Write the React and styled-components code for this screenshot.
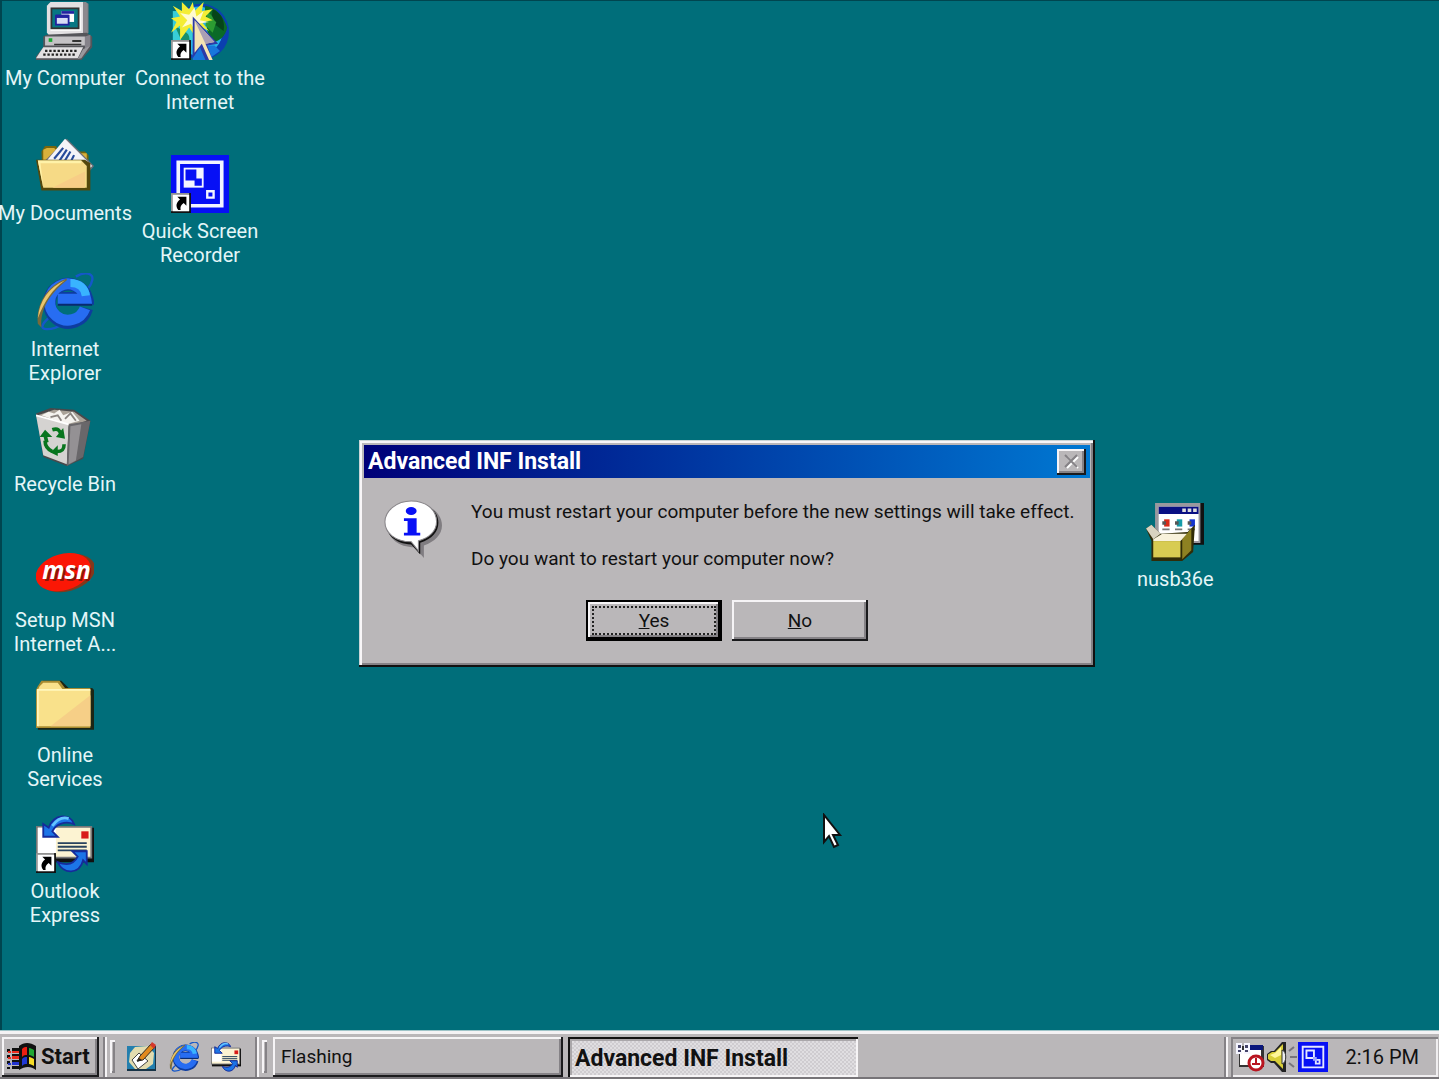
import React from "react"
import styled, { createGlobalStyle, css } from 'styled-components'

const GlobalStyle = createGlobalStyle`
  body {
    margin: 0;
    font-family: Roboto, "Liberation Sans", sans-serif;
    font-size: 19px;
    line-height: 24px;
    color: #111;
    overflow: hidden;
  }
  button {
    font: inherit;
    color: inherit;
    padding: 0;
    border: 0;
    border-radius: 0;
    background: #bab7b9;
  }
`

const raised = css`
  box-shadow: inset -2px -2px #1a1a1c, inset 2px 2px #f6f4f6, inset -4px -4px #858286;
`

const Screen = styled.div`
  display: flex;
  flex-direction: column;
  box-sizing: border-box;
  min-height: 100vh;
`

const Desktop = styled.main`
  position: relative;
  flex: 1;
  display: flex;
  align-items: flex-start;
  background: #006e7a;
  box-shadow: inset 2px 1px #00454f;
`

const IconColumn = styled.div`
  display: grid;
  grid-template-columns: minmax(0, 1fr);
  grid-template-rows: repeat(7, 1fr);
  width: 130px;
  height: 948px;
`

const SecondColumn = styled.div`
  display: flex;
  flex-direction: column;
  gap: 39px;
  width: 140px;
`

const Shortcut = styled.a`
  display: flex;
  flex-direction: column;
  align-items: center;
  gap: 6px;
  padding-top: 2px;
  color: #e4f6f8;
  font-size: 20px;
  text-align: center;
  text-decoration: none;
  white-space: pre;

  svg {
    width: 58px;
    height: 58px;
  }
`

const LooseShortcut = styled(Shortcut)`
  position: absolute;
  left: 1137px;
  top: 501px;
`

const Dialog = styled.section`
  position: absolute;
  left: 359px;
  top: 440px;
  width: 736px;
  box-sizing: border-box;
  padding: 5px 5px 26px;
  background: #bab7b9;
  box-shadow: inset -2px -2px #111, inset 1px 1px #c9d4d6, inset 3px 3px #f8f6f8, inset -4px -4px #858286;
`

const TitleBar = styled.header`
  display: flex;
  align-items: center;
  justify-content: space-between;
  height: 33px;
  padding: 0 4px;
  background: linear-gradient(90deg, #000078, #0078d2);
`

const Title = styled.h1`
  margin: 0;
  font-size: 23px;
  line-height: 24px;
  color: #fff;
`

const CloseButton = styled.button`
  ${raised}
  display: flex;
  align-items: center;
  justify-content: center;
  width: 29px;
  height: 26px;
`

const Message = styled.div`
  display: flex;
  gap: 29px;
  padding: 22px 20px 0;

  svg {
    flex: none;
  }
`

const MessageText = styled.div`
  white-space: nowrap;

  p {
    margin: 0 0 23px;
  }
`

const Buttons = styled.div`
  display: flex;
  justify-content: center;
  gap: 10px;
  margin-top: 6px;
`

const DialogButton = styled.button`
  ${raised}
  width: 136px;
  height: 41px;
  ${p => p.$focused && css`
    padding: 6px;
    box-shadow: inset 0 0 0 2px #000, inset -4px -4px #000, inset 4px 4px #f6f4f6, inset -6px -6px #858286;
  `}
`

const Focus = styled.span`
  display: block;
  border: 2px dotted #222;
  line-height: 25px;
`

const Pointer = styled.svg`
  position: absolute;
  left: 822px;
  top: 813px;
  width: 22px;
  height: 36px;
`

const Taskbar = styled.footer`
  display: flex;
  align-items: stretch;
  box-sizing: border-box;
  height: 49px;
  padding: 7px 1px 2px 2px;
  background: #bab7b9;
  box-shadow: inset 0 1px #9fc4c8, inset 0 4px #f4f2f4, inset 0 -2px #777478;
`

const StartButton = styled.button`
  ${raised}
  display: flex;
  align-items: center;
  gap: 4px;
  width: 97px;
  padding-left: 5px;
  font-weight: bold;
  font-size: 22px;

  svg {
    width: 30px;
    height: 29px;
  }
`

const Handle = styled.span`
  width: 5px;
  margin: 3px 0 4px ${p => p.$gap};
  box-shadow: inset 2px 2px #f6f4f6, inset -2px -2px #858286;
`

const Divider = styled.span`
  width: 4px;
  margin-left: ${p => p.$gap};
  background: linear-gradient(90deg, #858286 50%, #f6f4f6 50%);
`

const QuickLaunch = styled.nav`
  display: flex;
  align-items: center;
  gap: 12px;
  margin-left: 12px;

  a, svg {
    display: block;
    width: 30px;
    height: 30px;
  }
`

const TaskButton = styled.button`
  ${raised}
  width: 290px;
  margin-left: ${p => p.$gap};
  padding: 0 8px;
  text-align: left;
  ${p => p.$active && css`
    padding: 3px 7px 0;
    font-weight: bold;
    font-size: 23px;
    background: repeating-conic-gradient(#cfccd0 0 25%, #e0dee1 0 50%) 0 0 / 4px 4px;
    box-shadow: inset 2px 2px #111, inset -2px -2px #f6f4f6, inset 4px 4px #aaa7aa;
  `}
`

const Tray = styled.div`
  display: flex;
  align-items: center;
  gap: 1px;
  box-sizing: border-box;
  width: 207px;
  margin-left: 3px;
  padding: 0 19px 0 5px;
  font-size: 20px;
  box-shadow: inset 2px 2px #858286, inset -2px -2px #f0eef0;

  svg {
    width: 30px;
    height: 30px;
  }

  time {
    margin-left: auto;
  }
`

const Spacer = styled.span`
  margin-left: auto;
`

function ShortcutArrow() {
  return (
    <g>
      <path d="M0 21h11v11H0z" fill="#111" />
      <path d="M0 21h10v10H0z" fill="#999" />
      <path d="M1 22h9v9H1z" fill="#fff" />
      <path d="M3.500 23H8.500v5l-1.500-1.500C5.500 27.500 5 28.500 5.300 30.300H4C2.300 28 3 26 5 24.500z" fill="#000" />
    </g>
  )
}

function ComputerIcon() {
  return (
    <svg viewBox="0 0 32 32" aria-hidden="true">
      <path d="M7 1 9 0h18l2 1v16l-2 2H7z" fill="#77777c" />
      <path d="M6 2 8 0h18v18H7l-1-1z" fill="#e2e0e2" />
      <path d="M26 0h1.500l1 1v16l-2.500 2z" fill="#8c898e" />
      <path d="M8 3h17v13H8z" fill="#f8f8f8" />
      <path d="M8 3h16v12H8z" fill="#333" />
      <path d="M9 4h14v10H9z" fill="#087783" />
      <path d="M14 5h7v6h-7z" fill="#fff" />
      <path d="M14 5h7v1.500h-7z" fill="#2222a0" />
      <path d="M11 7.500h7v5h-7z" fill="#d8dcf5" stroke="#2222a0" />
      <path d="M11 7h7v1.800h-7z" fill="#2222a0" />
      <path d="m28 17 3 2v6l-6 7H0v-2l4-5v-6l2-1z" fill="#55555a" />
      <path d="M5 19h22v5H5z" fill="#c4c2c5" />
      <path d="m27 19 3-1v6l-3 2z" fill="#85828a" />
      <path d="M7 20h2v2H7z" fill="#18a830" />
      <path d="M20 21h5v1h-5zM10 23h15v.8H10z" fill="#333" />
      <path d="M4 25h22l-3 6H0z" fill="#e2e0e2" />
      <path d="M5 27h18M4 29h18" stroke="#222" strokeWidth="1.300" strokeDasharray="1.300 1" />
      <path d="m26 26 4-2-5 7-2 .5z" fill="#9a989d" />
    </svg>
  )
}

function ConnectIcon() {
  return (
    <svg viewBox="0 0 32 32" aria-hidden="true">
      <circle cx="16.500" cy="16.500" r="15.500" fill="#0b3fb0" />
      <circle cx="15" cy="16" r="13.500" fill="#29b5e8" />
      <path d="M1 5h11v16H1z" fill="#38cdd8" />
      <path d="M19 2c6 1 10 6 12 12-1 5-4 7-7 8-2-3-5-5-4-9 0-4-2-7-1-11z" fill="#0a6a28" />
      <path d="M23 4c5 2 7 7 6 12l-4-3-3-1z" fill="#064419" />
      <path d="M20 6c3 0 3 4 5 5l-2 6-4-4z" fill="#2c9b32" />
      <path d="M2 13c4 3 7 3 8 6l1 8-4-3z" fill="#178f6e" />
      <path d="M12 24h12l3 3-7 5h-8z" fill="#1877dc" />
      <path d="m12 0 1 5 5-5-1 5 6-1-4 4 4 2-6 1 4 5-6-3-1 7-4-6-5 7v-8l-5 4 3-6-3-2 5-1-4-6 5 3V0l4 4z" fill="#f4ed35" />
      <path d="m13 3 1 5 4-3-2 5 5 1-6 1-1 5-3-5-5 2 3-4-4-4 5 1z" fill="#fffbd0" />
      <path d="m12 8 14 15-6 1 3 8h-4l-3-7-4 6z" fill="#2c3aa8" />
      <path d="m13 10 11 12-5 1 4 9h-2l-4-9-4 5z" fill="#f5e3b2" />
      <path d="m13 10 11 12-5 1z" fill="#aa9fb5" />
      <ShortcutArrow />
    </svg>
  )
}

function DocumentsIcon() {
  return (
    <svg viewBox="0 0 32 32" aria-hidden="true">
      <path d="M3 8 5 5h6l2 3h14l2 2v19H4z" fill="#76660e" />
      <path d="M4 7 6 6h4l3 3h15v5H4z" fill="#d8b13c" />
      <path d="m17 1 15 15-6 7L5 13z" fill="#707078" />
      <path d="m16 1 15 15-6 5L6 13z" fill="#f4f4f8" />
      <path d="m10 12 5-6m-2 7 4-6m-1 6 3-5m0 6 2-4" stroke="#274b9b" strokeWidth="1.200" />
      <path d="M0 12.500h27l3 2v15H3z" fill="#54480c" />
      <path d="M1 13h24l3 3v12H4z" fill="#f6da86" />
      <path d="M27 19v9H9z" fill="#f7cd86" />
      <path d="M1 13h24v1.500H2.500L4 28z" fill="#fff2a8" />
    </svg>
  )
}

function ExplorerIcon() {
  return (
    <svg viewBox="0 0 32 32" aria-hidden="true">
      <path d="M22 2c5-3 10-2 9 2-.5 2-1.500 4-3 5M8 24c-5 4-6 7-2 7 3 0 6-1 9-3" fill="none" stroke="#1457ca" strokeWidth="1.300" />
      <path d="M28 19.500A10.500 10.500 0 1 1 28 14H12" fill="none" stroke="#0e3c9f" strokeWidth="7" />
      <path d="M27 19.500A10 10 0 1 1 27.500 14.500H12" fill="none" stroke="#276df2" strokeWidth="6" />
      <path d="M19 5.500c5 0 8 3 8.500 7" fill="none" stroke="#39b4ff" strokeWidth="4.500" />
      <path d="M12 17.500h19" stroke="#082a70" strokeWidth="1.200" />
      <path d="M17 3C6 7 0 17 1 28l2 2C2 20 8 11 17 4z" fill="#776a3b" />
      <path d="M16 4C7 8 2 15 1 25 5 15 9 9 16 4z" fill="#eac66d" />
    </svg>
  )
}

function RecycleIcon() {
  return (
    <svg viewBox="0 0 32 32" aria-hidden="true">
      <path d="m0 3 8-3 13 1 9 6-4 21-9 4L4 27z" fill="#49494b" />
      <path d="m1 4 9-3 11 1 7 5-10 3z" fill="#aaa298" />
      <path d="m3 4 4-2 3 1 3-2 2 3 5-2 4 5-7 2z" fill="#f5f3ef" />
      <path d="m8 5 4-1 2 3m2-1 3-3 3 4" fill="none" stroke="#8a8480" />
      <path d="m0 4 18 5-1 22L4 26z" fill="#d5d3d1" />
      <path d="m18 9 12-2-4 20-9 5z" fill="#69676a" />
      <path d="m19 10 6-1-3 20-4 2z" fill="#949194" />
      <path d="M0 4 18 9" stroke="#fff" />
      <path d="m6 19-1-4M9 12c3-1 4 0 5 3M15.500 20c0 3-1 4-4 4M9 24c-2-1-4-3-4-6" fill="none" stroke="#08751e" strokeWidth="2" />
      <path d="m11 16 5 1-1-6zM12 20.500l-4 4 4 2zM2 16l3-4 4 4z" fill="#08751e" />
    </svg>
  )
}

function MsnIcon() {
  return (
    <svg viewBox="0 0 32 32" aria-hidden="true">
      <ellipse cx="17" cy="16" rx="16" ry="10" fill="#82391c" transform="rotate(-16 17 16)" />
      <ellipse cx="15" cy="15.500" rx="15.500" ry="10" fill="#fb1705" transform="rotate(-16 15 15.500)" />
      <text x="4.500" y="20.500" fontFamily="Open Sans, sans-serif" fontSize="13.500" fontWeight="bold" fontStyle="italic" fill="#8b160b">msn</text>
      <text x="3.500" y="19.500" fontFamily="Open Sans, sans-serif" fontSize="13.500" fontWeight="bold" fontStyle="italic" fill="#fff">msn</text>
    </svg>
  )
}

function FolderIcon() {
  return (
    <svg viewBox="0 0 32 32" aria-hidden="true">
      <path d="m3 2 1-1h10l4 4h13l1 1v22H1z" fill="#1c2615" />
      <path d="m1 4 2-3h10l3 4h14v22H0V6z" fill="#a88b30" />
      <path d="m2 4 2-2h8l3 4h15v20H1V6z" fill="#f9e18b" />
      <path d="M30 9v17H8z" fill="#f6cf87" />
      <path d="M1 26V6h29" fill="none" stroke="#fff7be" />
    </svg>
  )
}

function MailArt() {
  return (
    <g>
      <path d="M1 7h31v19H1z" fill="#111" />
      <path d="M0 6h31v18H0z" fill="#777" />
      <path d="M1 7h29v16H1z" fill="#fcf3d2" />
      <path d="M1 7h10v14H1z" fill="#fff" />
      <path d="M25 9h4v4h-4z" fill="#d81b19" />
      <path d="M12 15.500h16M12 17.500h16M12 19.500h16" stroke="#29435e" />
      <path d="M21 5C19-1 10-1 7 7L4 5v7h8l-3-3c2-4 7-6 12-4z" fill="#1c75e7" stroke="#152b9b" />
      <path d="M12 26c3 7 12 7 14-1l2 2v-7h-8l3 3c-2 4-6 5-11 3z" fill="#1c75e7" stroke="#152b9b" />
      <path d="M9 6c3-4 6-5 9-4" fill="none" stroke="#65c5ff" strokeWidth="1.500" />
    </g>
  )
}

function RecorderIcon({ shortcut }) {
  return (
    <svg viewBox="0 0 32 32" aria-hidden="true">
      <path d="M0 0h32v32H0z" fill="#0710f5" />
      <path d="M4 4h24v24H4z" fill="none" stroke="#f4f5ff" strokeWidth="2" />
      <path d="M7 7h11v11H7z" fill="#f4f5ff" />
      <path d="M8 8h6v6H8zM13 13h4v4h-4z" fill="#0710f5" />
      <path d="M20 20h3.500v3.500H20z" fill="none" stroke="#f4f5ff" strokeWidth="1.300" />
      {shortcut && <ShortcutArrow />}
    </svg>
  )
}

function TrayRecorderIcon() {
  return (
    <svg viewBox="0 0 16 16" aria-hidden="true">
      <path d="M0 0h16v16H0z" fill="#0710f5" />
      <path d="M2.500 2.500h11v11h-11z" fill="none" stroke="#e4e6ff" />
      <path d="M4.500 4.500h4v4h-4zM9.500 9.500h2v2h-2z" fill="none" stroke="#e4e6ff" />
      <path d="M8 8h2v2H8z" fill="#9fa4ff" />
    </svg>
  )
}

function InstallerIcon() {
  return (
    <svg viewBox="0 0 32 32" aria-hidden="true">
      <path d="M6 0h26v23H6z" fill="#111" />
      <path d="M5 0h25v22H5z" fill="#9a989e" />
      <path d="M7 2h22v19H7z" fill="#fff" />
      <path d="M7 2h22v4H7z" fill="#090f83" />
      <path d="M20 3h2v2h-2zM23 3h2v2h-2zM26 3h2v2h-2z" fill="#ddd" />
      <path d="M10 9h3v4h-3z" fill="#d82a18" />
      <path d="M17 9h3v4h-3z" fill="#159baa" />
      <path d="M24 9h3v4h-3z" fill="#1535d0" />
      <path d="M9 10h2v2H9zM16 10h2v2h-2zM23 10h2v2h-2z" fill="#555" />
      <path d="M9 14.500h4m3 0h4m3 0h4" stroke="#777" />
      <path d="m0 14 3-2 5 5 15-1 4-4-1 15-6 5H3V21z" fill="#302c08" />
      <path d="m4 20 5-3h14l-4 4H4z" fill="#f8f2dc" />
      <path d="m0 14 3-2 5 5-4 3z" fill="#d8d3c0" />
      <path d="M4 21h15v9H4z" fill="#d8cc52" />
      <path d="m20 20 5-6v12l-5 5z" fill="#8d8122" />
    </svg>
  )
}

function InfoIcon() {
  return (
    <svg width="58" height="60" viewBox="0 0 32 33" aria-hidden="true">
      <path d="M17 2c8 0 15 5 15 12 0 5-4 9-10 11v7l-5-6C8 26 2 21 2 14S8 2 17 2z" fill="#807d81" />
      <path d="M15.500 1C24 1 30 6 30 12.500c0 5-3.500 9-10 11V30l-5-5.500C6 24 1 19 1 12.500S7 1 15.500 1z" fill="#111" />
      <path d="M15 .5C23 .5 29 5 29 12c0 5-4 9-10 10.500v5.500l-4-5C6 23 .5 18 .5 12S7 .5 15 .5z" fill="#fff" stroke="#89868a" strokeWidth=".6" />
      <ellipse cx="15" cy="6" rx="3" ry="2.200" fill="#0810f5" />
      <path d="M11 10h7v8h2v1.500h-9V18h2v-6.500h-2z" fill="#0810f5" />
    </svg>
  )
}

function WindowsIcon() {
  return (
    <svg viewBox="0 0 30 29" aria-hidden="true">
      <path d="M0 6h3v3H0zM5 5h7v3H5zM0 12h3v3H0zM5 11h7v3H5zM0 18h3v3H0zM5 17h7v3H5zM0 24h3v2H0zM5 23h7v3H5z" fill="#111" />
      <path d="M1 8h3v2H1zM5 8h7v2H5zM1 14h3v2H1zM5 13h7v3H5z" fill="#ed2b1d" />
      <path d="M1 20h3v2H1zM5 19h7v3H5z" fill="#2233cf" />
      <path d="M12 3c5-4 11-4 17 0v24c-5-4-11-4-17 0z" fill="#111" />
      <path d="M15 6c2-2 3-2 5-2v8c-2 0-3 0-5 2z" fill="#ec1f12" />
      <path d="M22 5c2 0 3 1 5 2v7c-2-1-3-2-5-2z" fill="#20a833" />
      <path d="M15 16c2-2 3-2 5-2v7c-2 0-3 0-5 2z" fill="#2038d4" />
      <path d="M22 14c2 0 3 1 5 2v7c-2-1-3-2-5-2z" fill="#f6dc26" />
    </svg>
  )
}

function ShowDesktopIcon() {
  return (
    <svg viewBox="0 0 30 30" aria-hidden="true">
      <path d="M0 4h29v25H0z" fill="#173447" />
      <path d="M0 4h28v23H0z" fill="#247fae" />
      <path d="m8 5 13-1 6 7-1 11-7 5H8l-6-7 1-9z" fill="#e2dcaf" />
      <path d="m5 18 7-7 9 8-10 8z" fill="#fff" stroke="#444" />
      <path d="m10 19 3-5L24 2l4 3-12 13z" fill="#e28a1d" stroke="#332c20" />
      <path d="m23 3 2-3 4 3-2 4z" fill="#d4372b" />
      <path d="m10 20 2-4 3 2z" fill="#222" />
    </svg>
  )
}

function SchedulerIcon() {
  return (
    <svg viewBox="0 0 30 30" aria-hidden="true">
      <path d="M3 4h25v21H3z" fill="#333" />
      <path d="M4 8h21v15H4z" fill="#fff" />
      <path d="M11 3h16v5H11z" fill="#0a167c" />
      <path d="M0 1h6v11H0zM8 1h6v11H8z" fill="#f5f5ff" />
      <path d="M2 3h3v3H2zM2 8h3v2H2zM9 3h3v3H9zM9 8h3v2H9z" fill="#44446a" />
      <circle cx="20" cy="21" r="7" fill="#fff" stroke="#b91520" strokeWidth="3" />
      <path d="M20 16v6m-4 0h8" stroke="#b91520" strokeWidth="2" />
    </svg>
  )
}

function SpeakerIcon() {
  return (
    <svg viewBox="0 0 30 30" aria-hidden="true">
      <path d="M0 12 4 9h3l8-9h4v30h-4l-8-9H4l-4-3z" fill="#222" />
      <path d="M1 12.500 5 10h3l8-8v25l-8-8H4l-3-2z" fill="#d9cf38" />
      <path d="m3 13 5-2 6-6v8l-6 3z" fill="#fff79a" />
      <path d="M15 8c5 1 5 13 0 14z" fill="#eee" stroke="#333" />
      <path d="m22 9 5-4m-4 10h7m-8 6 5 4" stroke="#77747b" strokeWidth="2" />
    </svg>
  )
}

function OutlookIcon({ shortcut }) {
  return <svg viewBox="0 0 32 32" aria-hidden="true"><MailArt />{shortcut && <ShortcutArrow />}</svg>
}

const shortcuts = [
  { label: 'My Computer', icon: <ComputerIcon /> },
  { label: 'My Documents', icon: <DocumentsIcon /> },
  { label: 'Internet\nExplorer', icon: <ExplorerIcon /> },
  { label: 'Recycle Bin', icon: <RecycleIcon /> },
  { label: 'Setup MSN\nInternet A...', icon: <MsnIcon /> },
  { label: 'Online\nServices', icon: <FolderIcon /> },
  { label: 'Outlook\nExpress', icon: <OutlookIcon shortcut /> },
]

function App() {
  return (
    <Screen>
      <GlobalStyle />
      <Desktop>
        <IconColumn>
          {shortcuts.map(({ label, icon }) => (
            <Shortcut href="#" key={label}>{icon}<span>{label}</span></Shortcut>
          ))}
        </IconColumn>
        <SecondColumn>
          <Shortcut href="#"><ConnectIcon /><span>{'Connect to the\nInternet'}</span></Shortcut>
          <Shortcut href="#"><RecorderIcon shortcut /><span>{'Quick Screen\nRecorder'}</span></Shortcut>
        </SecondColumn>
        <LooseShortcut href="#"><InstallerIcon /><span>nusb36e</span></LooseShortcut>
        <Dialog role="dialog" aria-labelledby="dialog-title">
          <TitleBar>
            <Title id="dialog-title">Advanced INF Install</Title>
            <CloseButton aria-label="Close">
              <svg width="16" height="15" viewBox="0 0 16 15" aria-hidden="true">
                <path d="m3 3 11 11m0-11L3 14" stroke="#fff" strokeWidth="2" />
                <path d="m1 1 12 12m0-12L1 13" stroke="#858286" strokeWidth="2" />
              </svg>
            </CloseButton>
          </TitleBar>
          <Message>
            <InfoIcon />
            <MessageText>
              <p>You must restart your computer before the new settings will take effect.</p>
              <p>Do you want to restart your computer now?</p>
            </MessageText>
          </Message>
          <Buttons>
            <DialogButton $focused><Focus><u>Y</u>es</Focus></DialogButton>
            <DialogButton><u>N</u>o</DialogButton>
          </Buttons>
        </Dialog>
        <Pointer viewBox="0 0 22 36" aria-hidden="true">
          <path d="M2 2v27l5-6 5 11 4-2-5-10h7z" fill="#fff" stroke="#111" strokeWidth="2" />
        </Pointer>
      </Desktop>
      <Taskbar>
        <StartButton><WindowsIcon />Start</StartButton>
        <Divider $gap="4px" />
        <Handle $gap="3px" />
        <QuickLaunch aria-label="Quick launch">
          <a href="#" aria-label="Show desktop"><ShowDesktopIcon /></a>
          <a href="#" aria-label="Internet Explorer"><ExplorerIcon /></a>
          <a href="#" aria-label="Outlook Express"><OutlookIcon /></a>
        </QuickLaunch>
        <Divider $gap="14px" />
        <Handle $gap="3px" />
        <TaskButton $gap="6px">Flashing</TaskButton>
        <TaskButton $gap="5px" $active>Advanced INF Install</TaskButton>
        <Spacer />
        <Divider $gap="0" />
        <Tray>
          <SchedulerIcon />
          <SpeakerIcon />
          <TrayRecorderIcon />
          <time>2:16 PM</time>
        </Tray>
      </Taskbar>
    </Screen>
  )
}

export default App
